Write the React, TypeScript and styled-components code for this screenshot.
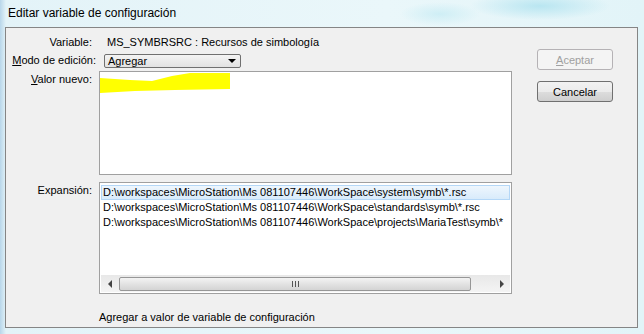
import React from 'react';
import styled, { createGlobalStyle } from 'styled-components';

const GlobalStyle = createGlobalStyle`
  html, body {
    margin: 0;
    padding: 0;
    width: 644px;
    height: 334px;
    overflow: hidden;
  }
  body {
    font-family: "Liberation Sans", Arial, sans-serif;
    font-size: 11px;
    color: #000;
  }
`;

const Glass = styled.div`
  width: 644px;
  height: 334px;
  display: flex;
  flex-direction: column;
  background:
    radial-gradient(ellipse 70px 14px at 540px 6px, rgba(180, 228, 240, 0.9), transparent),
    radial-gradient(ellipse 40px 12px at 440px 14px, rgba(200, 236, 244, 0.8), transparent),
    linear-gradient(90deg, #b8d6ea 0px, #e3f3f8 6px, #eaf7fa 60%, #e2f4f8 100%);
`;

const TitleBar = styled.div`
  height: 27px;
  flex: none;
  padding-left: 8px;
  line-height: 26px;
  font-size: 12px;
  color: #000;
`;

const Panel = styled.div`
  margin-left: 5px;
  width: 631px;
  height: 299px;
  flex: none;
  border: 1px solid #858585;
  background: #f0f0f0;
  display: flex;
  align-items: flex-start;
`;

const Form = styled.div`
  display: grid;
  grid-template-columns: 93px 413px;
  grid-template-rows: 14px 14px 107px 112px 14px;
  row-gap: 4px;
  padding-top: 7px;
`;

const Label = styled.div<{ $pr?: number; $top?: boolean }>`
  text-align: right;
  padding-right: ${p => (p.$pr ?? 7)}px;
  line-height: 14px;
  white-space: nowrap;
  align-self: ${p => (p.$top ? 'start' : 'center')};
  padding-top: ${p => (p.$top ? 1 : 0)}px;
`;

const Value = styled.div`
  padding-left: 8px;
  line-height: 14px;
  white-space: nowrap;
`;

const Select = styled.div`
  margin-left: 5px;
  width: 128px;
  height: 12px;
  border: 1px solid #707070;
  border-radius: 2px;
  background: linear-gradient(#f4f4f4, #e2e2e2);
  display: flex;
  align-items: center;
  justify-content: space-between;
  padding: 0 4px 0 3px;
  line-height: 12px;
  margin-top: 1px;
`;

const Arrow = styled.span`
  width: 0;
  height: 0;
  border-left: 4px solid transparent;
  border-right: 4px solid transparent;
  border-top: 4px solid #000;
`;

const TextBox = styled.div`
  position: relative;
  align-self: start;
  border: 1px solid #a0a0a0;
  background: #fff;
  height: 102px;
`;

const Scribble = styled.svg`
  position: absolute;
  left: 0;
  top: 0;
`;

const ListBox = styled.div`
  border: 1px solid #a0a0a0;
  background: #fff;
  height: 112px;
  display: flex;
  flex-direction: column;
  padding: 2px 1px 1px 1px;
  box-sizing: border-box;
`;

const Item = styled.div<{ $sel?: boolean }>`
  height: 15px;
  line-height: 13px;
  padding-left: 1px;
  white-space: nowrap;
  overflow: hidden;
  box-sizing: border-box;
  border: 1px solid ${p => (p.$sel ? '#b4d7f7' : 'transparent')};
  background: ${p => (p.$sel ? 'linear-gradient(#eef6fd, #d8ebfb)' : 'transparent')};
`;

const HScroll = styled.div`
  margin-top: auto;
  height: 17px;
  display: flex;
  align-items: center;
  background: linear-gradient(#e8e8e8, #f4f4f4);
`;

const ScrollArrow = styled.div<{ $dir: 'left' | 'right' }>`
  width: 17px;
  height: 17px;
  display: flex;
  align-items: center;
  justify-content: center;
  &::after {
    content: '';
    border-top: 4px solid transparent;
    border-bottom: 4px solid transparent;
    ${p => (p.$dir === 'left' ? 'border-right: 4px solid #444;' : 'border-left: 4px solid #444;')}
  }
`;

const Thumb = styled.div`
  margin-left: 1px;
  width: 352px;
  height: 14px;
  border: 1px solid #979797;
  border-radius: 2px;
  box-sizing: border-box;
  background: linear-gradient(#f3f3f3, #e3e3e3 50%, #d4d4d4);
  display: flex;
  align-items: center;
  justify-content: center;
  gap: 2px;
`;

const Grip = styled.span`
  width: 1px;
  height: 6px;
  background: #555;
`;

const Status = styled.div`
  line-height: 14px;
  white-space: nowrap;
  margin-top: 12px;
`;

const Buttons = styled.div`
  margin-left: 25px;
  padding-top: 21px;
  display: flex;
  flex-direction: column;
  gap: 11px;
`;

const Button = styled.div<{ $disabled?: boolean }>`
  width: 76px;
  height: 21px;
  box-sizing: border-box;
  border-radius: 3px;
  display: flex;
  align-items: center;
  justify-content: center;
  border: 1px solid ${p => (p.$disabled ? '#b5b2b5' : '#707070')};
  color: ${p => (p.$disabled ? '#a0a0a0' : '#000')};
  background: ${p =>
    p.$disabled ? '#f4f4f4' : 'linear-gradient(#f2f2f2, #ebebeb 50%, #dddddd 51%, #cfcfcf)'};
`;

const paths = [
  'D:\\workspaces\\MicroStation\\Ms 081107446\\WorkSpace\\system\\symb\\*.rsc',
  'D:\\workspaces\\MicroStation\\Ms 081107446\\WorkSpace\\standards\\symb\\*.rsc',
  'D:\\workspaces\\MicroStation\\Ms 081107446\\WorkSpace\\projects\\MariaTest\\symb\\*',
];

export default function App() {
  return (
    <>
      <GlobalStyle />
      <Glass>
        <TitleBar>Editar variable de configuración</TitleBar>
        <Panel>
          <Form>
            <Label>Variable:</Label>
            <Value>MS_SYMBRSRC : Recursos de simbología</Value>

            <Label $pr={3}>
              <u>M</u>odo de edición:
            </Label>
            <Select>
              <span>Agregar</span>
              <Arrow />
            </Select>

            <Label $top>
              <u>V</u>alor nuevo:
            </Label>
            <TextBox>
              <Scribble width="140" height="24" viewBox="0 0 140 24">
                <polygon
                  fill="#ffff00"
                  points="0,6 30,8 52,9 72,4 90,1 130,1 130,17 75,18 35,19 0,21"
                />
              </Scribble>
            </TextBox>

            <Label $top>Expansión:</Label>
            <ListBox>
              {paths.map((p, i) => (
                <Item key={p} $sel={i === 0}>
                  {p}
                </Item>
              ))}
              <HScroll>
                <ScrollArrow $dir="left" />
                <Thumb>
                  <Grip />
                  <Grip />
                  <Grip />
                </Thumb>
                <div style={{ flex: 1 }} />
                <ScrollArrow $dir="right" />
              </HScroll>
            </ListBox>

            <div />
            <Status>Agregar a valor de variable de configuración</Status>
          </Form>
          <Buttons>
            <Button $disabled>
              <span>
                <u>A</u>ceptar
              </span>
            </Button>
            <Button>Cancelar</Button>
          </Buttons>
        </Panel>
      </Glass>
    </>
  );
}
